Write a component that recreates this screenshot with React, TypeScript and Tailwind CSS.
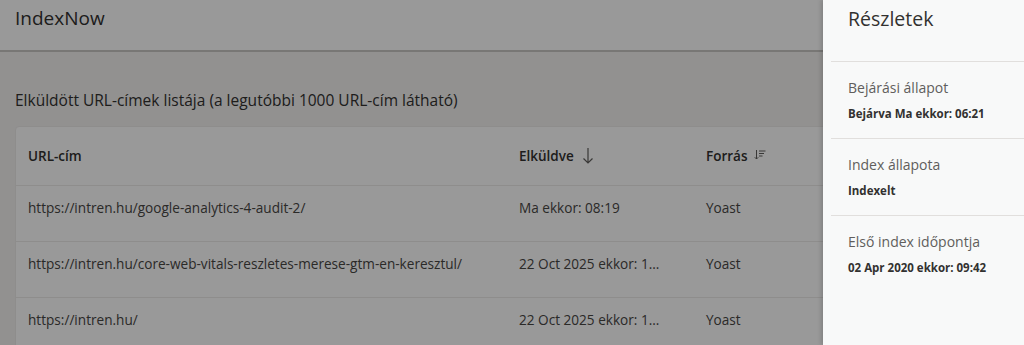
const rows = [
  { url: "https://intren.hu/google-analytics-4-audit-2/", sent: "Ma ekkor: 08:19", source: "Yoast" },
  { url: "https://intren.hu/core-web-vitals-reszletes-merese-gtm-en-keresztul/", sent: "22 Oct 2025 ekkor: 1...", source: "Yoast" },
  { url: "https://intren.hu/", sent: "22 Oct 2025 ekkor: 1...", source: "Yoast" },
];

const details = [
  { label: "Bejárási állapot", value: "Bejárva Ma ekkor: 06:21" },
  { label: "Index állapota", value: "Indexelt" },
  { label: "Első index időpontja", value: "02 Apr 2020 ekkor: 09:42" },
];

function ArrowDown() {
  return (
    <svg width="12" height="18" viewBox="0 0 12 18" fill="none" stroke="currentColor" strokeWidth="1.2">
      <path d="M6 1v15M1.5 11.5 6 16l4.5-4.5" />
    </svg>
  );
}

function SortLines() {
  return (
    <svg width="12" height="12" viewBox="0 0 12 12" fill="none" stroke="currentColor" strokeWidth="1">
      <path d="M2.5 1v9M0.8 8.3 2.5 10l1.7-1.7M5 2h6.5M5 4.5h5M5 7h3.5" />
    </svg>
  );
}

export default function App() {
  return (
    <div className="relative w-full h-[345px] overflow-hidden bg-[#f3f2f1] font-['Open_Sans',sans-serif]">
      <div className="flex flex-col">
        <header className="h-[52px] bg-white border-b-2 border-[#c8c6c4] flex items-center px-[15px]">
          <h1 className="text-[19px] text-[#323130] leading-none -mt-[14px]">IndexNow</h1>
        </header>
        <div className="px-[15px]">
          <h2 className="mt-[38px] mb-[16px] text-[15.5px] leading-[20px] text-[#323130]">
            Elküldött URL-címek listája (a legutóbbi 1000 URL-cím látható)
          </h2>
          <div className="bg-white border border-[#edebe9] rounded-sm w-[1000px]">
            <div className="h-[59px] flex items-center border-b border-[#edebe9] text-[13.5px] font-semibold text-[#323130]">
              <div className="w-[503px] pl-[12px]">URL-cím</div>
              <div className="w-[187px] flex items-center gap-[8px]">
                Elküldve
                <span className="text-[#605e5c]"><ArrowDown /></span>
              </div>
              <div className="flex items-center gap-[6px]">
                Forrás
                <span className="text-[#605e5c] -mt-[2px]"><SortLines /></span>
              </div>
            </div>
            {rows.map((r) => (
              <div key={r.url} className="h-[56px] flex border-b border-[#edebe9] text-[13.6px] text-[#484644] pt-[12px]">
                <div className="w-[503px] pl-[12px] truncate">{r.url}</div>
                <div className="w-[187px]">{r.sent}</div>
                <div>{r.source}</div>
              </div>
            ))}
          </div>
        </div>
      </div>

      <div className="absolute inset-0 bg-black/40" />

      <aside className="absolute top-0 right-0 bottom-0 w-[201px] bg-[#f8f9f9] shadow-[-2px_0_4px_rgba(0,0,0,0.15)] flex flex-col">
        <div className="h-[62px] ml-[8px] pl-[17px] pt-[6px] border-b border-[#e1dfdd]">
          <h3 className="text-[19.5px] text-[#323130] leading-[26px]">Részletek</h3>
        </div>
        {details.map((d) => (
          <div key={d.label} className="ml-[8px] pl-[17px] h-[77px] border-b border-[#e1dfdd] last:border-b-0 pt-[16px]">
            <div className="text-[14px] text-[#605e5c] leading-[20px]">{d.label}</div>
            <div className="mt-[8px] text-[11.5px] font-bold text-[#323130] leading-[16px]">{d.value}</div>
          </div>
        ))}
      </aside>
    </div>
  );
}
